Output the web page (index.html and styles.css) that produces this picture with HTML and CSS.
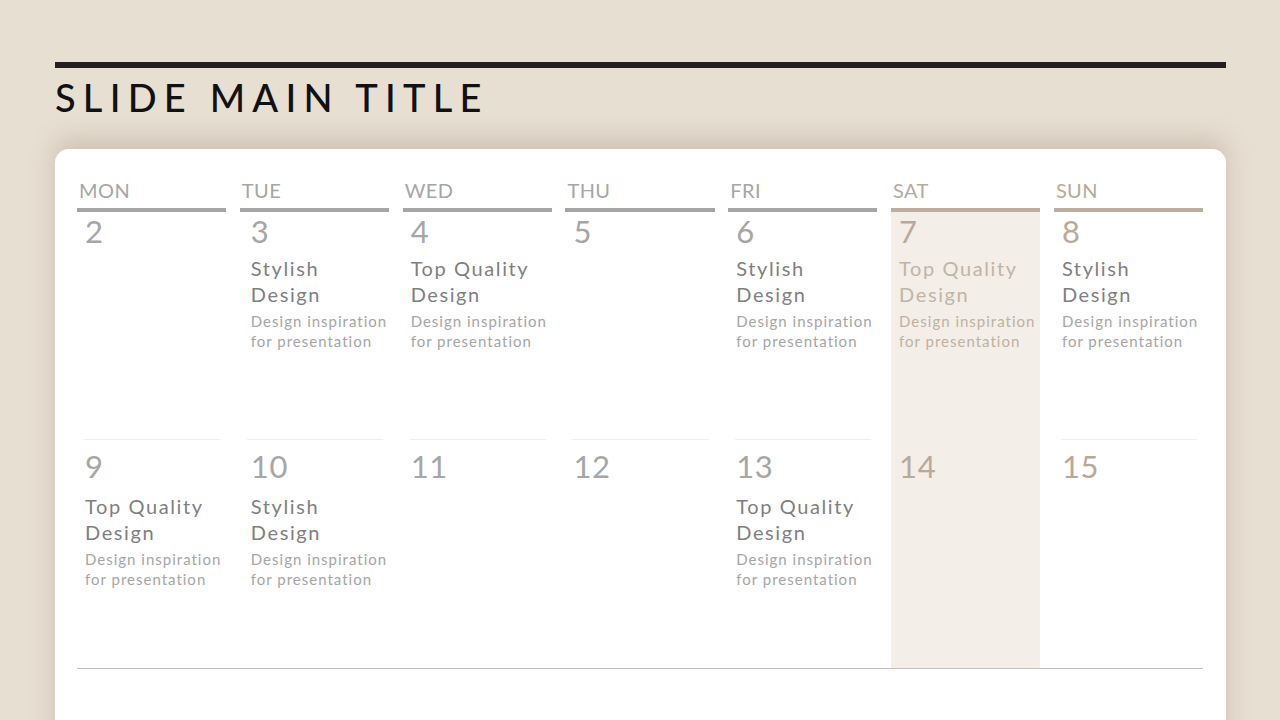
FILE: index.html
```html
<!DOCTYPE html>
<html lang="en">
<head>
<meta charset="utf-8">
<title>Slide Main Title</title>
<link rel="stylesheet" href="styles.css">
</head>
<body>
<div class="slide">
  <div class="topbar"></div>
  <h1 class="title">SLIDE MAIN TITLE</h1>
  <div class="card">
    <div class="calendar">
      <div class="head">MON</div>
      <div class="head">TUE</div>
      <div class="head">WED</div>
      <div class="head">THU</div>
      <div class="head">FRI</div>
      <div class="head accent">SAT</div>
      <div class="head accent">SUN</div>

      <div class="cell r1"><div class="num">2</div></div>
      <div class="cell r1 tue"><div class="num">3</div><div class="ev-title">Stylish<br>Design</div><div class="ev-desc">Design inspiration<br>for presentation</div></div>
      <div class="cell r1"><div class="num">4</div><div class="ev-title">Top Quality<br>Design</div><div class="ev-desc">Design inspiration<br>for presentation</div></div>
      <div class="cell r1"><div class="num">5</div></div>
      <div class="cell r1"><div class="num">6</div><div class="ev-title">Stylish<br>Design</div><div class="ev-desc">Design inspiration<br>for presentation</div></div>
      <div class="cell r1 sat"><div class="num">7</div><div class="ev-title">Top Quality<br>Design</div><div class="ev-desc">Design inspiration<br>for presentation</div></div>
      <div class="cell r1 sun"><div class="num">8</div><div class="ev-title">Stylish<br>Design</div><div class="ev-desc">Design inspiration<br>for presentation</div></div>

      <div class="cell r2"><div class="inner"><div class="num">9</div><div class="ev-title">Top Quality<br>Design</div><div class="ev-desc">Design inspiration<br>for presentation</div></div></div>
      <div class="cell r2 tue"><div class="inner"><div class="num">10</div><div class="ev-title">Stylish<br>Design</div><div class="ev-desc">Design inspiration<br>for presentation</div></div></div>
      <div class="cell r2"><div class="inner"><div class="num">11</div></div></div>
      <div class="cell r2"><div class="inner"><div class="num">12</div></div></div>
      <div class="cell r2"><div class="inner"><div class="num">13</div><div class="ev-title">Top Quality<br>Design</div><div class="ev-desc">Design inspiration<br>for presentation</div></div></div>
      <div class="cell r2 sat"><div class="inner"><div class="num">14</div></div></div>
      <div class="cell r2 sun"><div class="inner"><div class="num">15</div></div></div>
    </div>
    <div class="bottom-rule"></div>
  </div>
</div>
</body>
</html>
```
FILE: styles.css
```css
html, body {
  margin: 0;
  padding: 0;
}
body {
  background: #e8dfd3;
  font-family: "Lato", "Open Sans", sans-serif;
}
.slide {
  box-sizing: border-box;
  width: 1280px;
  height: 720px;
  overflow: hidden;
  padding: 62px 54px 0 55px;
}
.topbar {
  height: 6px;
  background: #231f20;
}
.title {
  margin: 6px 0 0 0;
  font-weight: 500;
  font-size: 38px;
  line-height: 46px;
  letter-spacing: 7.2px;
  color: #111;
}
.card {
  margin-top: 29px;
  background: #fff;
  border-radius: 14px;
  box-shadow: 0 -10px 26px rgba(110, 85, 60, 0.22);
  padding: 29px 23px 60px 22px;
  height: 600px;
}
.calendar {
  display: grid;
  grid-template-columns: repeat(7, minmax(0, 1fr));
  grid-template-rows: auto 227px 229px;
  column-gap: 13.7px;
}
.head {
  font-size: 20px;
  line-height: 24px;
  color: #a6a6a6;
  padding: 0 0 6px 2px;
  border-bottom: 4px solid #a6a6a6;
  letter-spacing: 0.02em;
}
.head.accent {
  color: #b9a998;
  border-bottom-color: #bcad9e;
}
.cell {
  padding: 4px 0 0 8px;
  min-width: 0;
}
.cell.tue {
  padding-left: 11px;
}
.cell.r2 {
  padding: 0 6px 0 7px;
}
.cell.r2.tue .inner {
  padding-left: 4px;
}
.cell.r2 .inner {
  border-top: 1px solid #efefef;
  padding: 11px 0 0 1px;
}
.num {
  font-size: 31px;
  line-height: 30px;
  color: #a6a6a6;
  height: 30px;
  letter-spacing: 0.02em;
}
.ev-title {
  margin-top: 9px;
  font-size: 20px;
  line-height: 26px;
  color: #7f7f7f;
  letter-spacing: 1.6px;
  white-space: nowrap;
}
.r2 .ev-title {
  margin-top: 12px;
}
.ev-desc {
  margin-top: 4px;
  font-size: 15px;
  line-height: 20px;
  color: #a6a6a6;
  letter-spacing: 1px;
  white-space: nowrap;
}
.sat {
  background: #f3eee8;
}
.sat .num, .sun .num {
  color: #b9a998;
}
.sat .ev-title {
  color: #c2b4a5;
}
.sat .ev-desc {
  color: #bfb1a3;
}
.bottom-rule {
  border-top: 1.5px solid #c2c2c2;
}
```
